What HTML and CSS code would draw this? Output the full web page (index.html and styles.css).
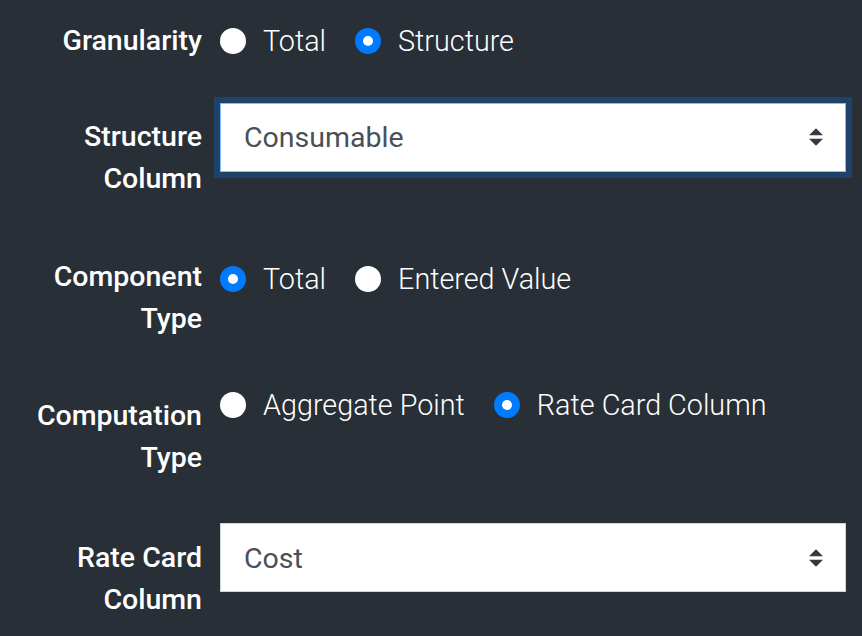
FILE: index.html
```html
<!DOCTYPE html>
<html>
<head>
<meta charset="utf-8">
<link rel="stylesheet" href="styles.css">
</head>
<body>
<div class="form">
  <div class="row row-1">
    <div class="label">Granularity</div>
    <div class="control">
      <span class="radio"><span class="dot"></span><span class="text">Total</span></span>
      <span class="radio checked"><span class="dot"></span><span class="text">Structure</span></span>
    </div>
  </div>
  <div class="row row-2">
    <div class="label label-select">Structure<br>Column</div>
    <div class="control">
      <div class="select focused">
        <span class="value">Consumable</span>
        <svg class="arrows" width="14" height="18" viewBox="0 0 4 5"><path d="M2 0L0 2h4zm0 5L0 3h4z" fill="#343a40"/></svg>
      </div>
    </div>
  </div>
  <div class="row row-3">
    <div class="label">Component<br>Type</div>
    <div class="control control-low">
      <span class="radio checked"><span class="dot"></span><span class="text">Total</span></span>
      <span class="radio"><span class="dot"></span><span class="text">Entered Value</span></span>
    </div>
  </div>
  <div class="row row-4">
    <div class="label label-low">Computation<br>Type</div>
    <div class="control">
      <span class="radio"><span class="dot"></span><span class="text">Aggregate Point</span></span>
      <span class="radio checked"><span class="dot"></span><span class="text">Rate Card Column</span></span>
    </div>
  </div>
  <div class="row row-5">
    <div class="label label-select-2">Rate Card<br>Column</div>
    <div class="control">
      <div class="select">
        <span class="value">Cost</span>
        <svg class="arrows" width="14" height="18" viewBox="0 0 4 5"><path d="M2 0L0 2h4zm0 5L0 3h4z" fill="#343a40"/></svg>
      </div>
    </div>
  </div>
</div>
</body>
</html>
```
FILE: styles.css
```css
html, body {
  margin: 0;
  padding: 0;
  background: #282f37;
}
body {
  width: 862px;
  height: 636px;
  overflow: hidden;
  font-family: Roboto, "Liberation Sans", sans-serif;
  font-size: 28.5px;
  line-height: 42.5px;
  color: #ffffff;
}
.form {
  padding: 20px 16px 0 0;
}
.row {
  display: flex;
  align-items: flex-start;
  gap: 18px;
}
.row-2 { margin-top: 40px; }
.row-3 { margin-top: 55px; }
.row-4 { margin-top: 43px; }
.row-5 { margin-top: 43.5px; }
.label {
  width: 202px;
  flex: none;
  text-align: right;
  font-weight: 500;
}
.label-select { padding-top: 13px; }
.label-select-2 { padding-top: 13.5px; }
.label-low { padding-top: 11px; }
.control {
  flex: 1;
  display: flex;
  align-items: flex-start;
}
.control-low { padding-top: 2px; }
.radio {
  display: inline-flex;
  align-items: flex-start;
  margin-right: 29px;
}
.radio .text {
  font-weight: 300;
  font-size: 28.75px;
}
.dot {
  flex: none;
  width: 26px;
  height: 26px;
  border-radius: 50%;
  background: #ffffff;
  margin-top: 8px;
  margin-right: 17px;
  display: flex;
  align-items: center;
  justify-content: center;
}
.radio.checked .dot {
  background: #007bff;
}
.radio.checked .dot::after {
  content: "";
  width: 10px;
  height: 10px;
  border-radius: 50%;
  background: #ffffff;
}
.select {
  flex: 1;
  box-sizing: border-box;
  height: 69px;
  background: #ffffff;
  border: 1px solid #ced4da;
  display: flex;
  align-items: center;
  justify-content: space-between;
  padding: 3px 22px 0 23px;
  color: #495057;
}
.select.focused {
  border-color: #80bdff;
  box-shadow: 0 0 0 6px #1e4269;
}
.arrows {
  display: block;
  margin-top: -3px;
}
```
